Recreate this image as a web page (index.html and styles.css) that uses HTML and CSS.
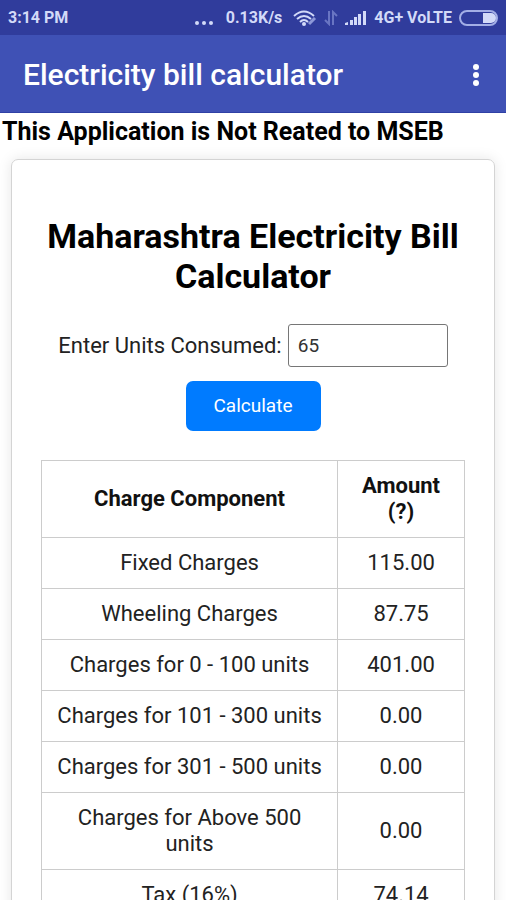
FILE: index.html
```
<!DOCTYPE html>
<html lang="en">
<head>
    <meta charset="UTF-8" />
    <meta name="viewport" content="width=device-width, initial-scale=1.0" />
    <title>Electricity bill calculator</title>
    <link rel="stylesheet" href="styles.css">
</head>
<body>
    <div class="status-bar">
        <span class="time">3:14 PM</span>
        <div class="status-icons">
            <svg class="dots" width="18" height="16" viewBox="0 0 18 16">
                <circle cx="2" cy="13" r="2" />
                <circle cx="9" cy="13" r="2" />
                <circle cx="16" cy="13" r="2" />
            </svg>
            <span class="speed">0.13K/s</span>
            <svg class="wifi" width="24" height="16" viewBox="0 0 24 16">
                <path d="M1 6 Q11 -3 21 6" />
                <path d="M4 9 Q11 3 18 9" />
                <path d="M7 12 Q11 8 15 12" />
                <circle cx="11" cy="14" r="2" />
                <path class="faint" d="M16 14 L22 8" />
            </svg>
            <svg class="arrows" width="14" height="16" viewBox="0 0 14 16">
                <path d="M5 1 V14 L1 10 M9 15 V2 L13 6" />
            </svg>
            <svg class="signal" width="22" height="16" viewBox="0 0 22 16">
                <path d="M0 15 v-2 l3 -1 v3z M5 15 v-5 h3 v5z M9 15 v-8 h3 v8z M13 15 v-11 h3 v11z M18 15 v-14 h3 v14z" />
            </svg>
            <span class="network">4G+ VoLTE</span>
            <svg class="battery" width="39" height="16" viewBox="0 0 39 16">
                <rect class="outline" x="1" y="1" width="37" height="14" rx="7" />
                <path d="M24 3 h8 a5 5 0 0 1 0 10 h-8z" />
            </svg>
        </div>
    </div>

    <header>
        <h1>Electricity bill calculator</h1>
        <button class="menu" type="button" aria-label="More options">
            <svg width="8" height="24" viewBox="0 0 8 24">
                <circle cx="4" cy="4" r="3" />
                <circle cx="4" cy="12" r="3" />
                <circle cx="4" cy="20" r="3" />
            </svg>
        </button>
    </header>

    <main>
        <p class="notice">This Application is Not Reated to MSEB</p>

        <div class="container">
            <h2>Maharashtra Electricity Bill Calculator</h2>

            <form id="billForm">
                <div class="field">
                    <label for="units">Enter Units Consumed:</label>
                    <input type="text" inputmode="numeric" id="units" value="65" />
                </div>
                <button class="calculate" type="submit">Calculate</button>
            </form>

            <table>
                <thead>
                    <tr>
                        <th class="component">Charge Component</th>
                        <th>Amount (?)</th>
                    </tr>
                </thead>
                <tbody>
                    <tr><td>Fixed Charges</td><td>115.00</td></tr>
                    <tr><td>Wheeling Charges</td><td>87.75</td></tr>
                    <tr><td>Charges for 0 - 100 units</td><td>401.00</td></tr>
                    <tr><td>Charges for 101 - 300 units</td><td>0.00</td></tr>
                    <tr><td>Charges for 301 - 500 units</td><td>0.00</td></tr>
                    <tr><td>Charges for Above 500 units</td><td>0.00</td></tr>
                    <tr><td>Tax (16%)</td><td>74.14</td></tr>
                </tbody>
            </table>
        </div>
    </main>

    <script>
        // Stay on the page when the form is submitted
        document.getElementById("billForm").addEventListener("submit", (e) => {
            e.preventDefault();
        });
    </script>
</body>
</html>
```
FILE: styles.css
```
/* Basic reset */
* {
    margin: 0;
    padding: 0;
    box-sizing: border-box;
}

body {
    font-family: Roboto, "Liberation Sans", sans-serif;
    font-size: 22px;
    line-height: 26px;
    color: #222;
    background-color: #fff;
    display: flex;
    flex-direction: column;
    height: 100vh;
    overflow: hidden;
}

/* Phone status bar */
.status-bar {
    flex: none;
    display: flex;
    justify-content: space-between;
    align-items: center;
    height: 35px;
    padding: 0 8px;
    background-color: #303c9c;
    color: #d3daf8;
    font-size: 16px;
    font-weight: 700;
}

.status-icons {
    display: flex;
    align-items: center;
    gap: 7px;
}

.status-icons svg {
    fill: #d3daf8;
}

.speed {
    margin: 0 4px 0 6px;
}

.wifi path {
    fill: none;
    stroke: #d3daf8;
    stroke-width: 2;
}

.wifi .faint {
    stroke: #8d98d8;
    stroke-width: 3;
}

.status-icons .arrows {
    fill: none;
    stroke: #6975c3;
    stroke-width: 2;
}

.battery .outline {
    fill: none;
    stroke: #a3aee6;
    stroke-width: 2;
}

/* App header */
header {
    flex: none;
    display: flex;
    justify-content: space-between;
    align-items: center;
    height: 78px;
    padding: 2px 18px 0 23px;
    background-color: #3f51b5;
    border-bottom: 1px solid #2f40a5;
    color: #fff;
}

h1 {
    font-size: 30px;
    font-weight: 500;
    line-height: 34px;
}

.menu {
    display: flex;
    padding: 0 8px;
    background: none;
    border: none;
    cursor: pointer;
}

.menu svg {
    fill: #fff;
}

/* Main content */
main {
    flex: 1;
    min-height: 0;
    overflow-y: auto;
    scrollbar-width: none;
}

.notice {
    padding: 4px 2px 0;
    font-size: 25px;
    font-weight: 700;
    line-height: 30px;
    color: #000;
}

.container {
    margin: 12px 11px;
    padding: 56px 29px 28px;
    border: 1px solid #d4d4d4;
    border-radius: 7px;
    box-shadow: 0 0 14px rgba(0, 0, 0, 0.1);
    text-align: center;
}

h2 {
    margin-bottom: 28px;
    font-size: 34px;
    font-weight: 700;
    line-height: 40px;
    color: #000;
}

/* Calculator form */
.field {
    display: flex;
    justify-content: center;
    align-items: center;
    gap: 6px;
    margin-bottom: 14px;
}

.field input {
    width: 160px;
    height: 43px;
    padding: 0 9px;
    border: 1px solid #767676;
    border-radius: 3px;
    font-family: inherit;
    font-size: 19px;
    color: #333;
}

.calculate {
    padding: 12px 28px;
    background-color: #007bff;
    border: none;
    border-radius: 7px;
    color: #fff;
    font-family: inherit;
    font-size: 19px;
    line-height: 26px;
    cursor: pointer;
}

/* Bill table */
table {
    width: 100%;
    margin-top: 29px;
    border-collapse: collapse;
}

th,
td {
    padding: 12px 11px;
    border: 1px solid #ccc;
}

th {
    font-weight: 700;
    color: #111;
}

.component {
    width: 70%;
}
```
